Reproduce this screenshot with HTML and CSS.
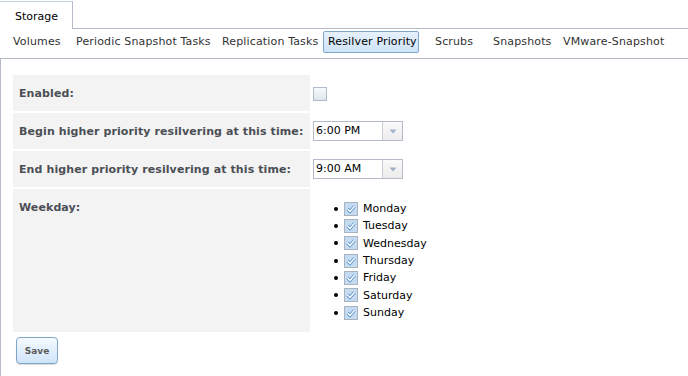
FILE: index.html
```html
<!DOCTYPE html>
<html>
<head>
<meta charset="utf-8">
<link rel="stylesheet" href="styles.css">
</head>
<body>
<div class="tabbar">
  <div class="tab">Storage</div>
  <div class="tabfill"></div>
</div>
<div class="subtabs">
  <span class="subtab st-volumes">Volumes</span>
  <span class="subtab st-periodic">Periodic Snapshot Tasks</span>
  <span class="subtab st-replication">Replication Tasks</span>
  <span class="subtab st-resilver active">Resilver Priority</span>
  <span class="subtab st-scrubs">Scrubs</span>
  <span class="subtab st-snapshots">Snapshots</span>
  <span class="subtab st-vmware">VMware-Snapshot</span>
</div>
<div class="pane">
  <div class="form">
    <div class="label">Enabled:</div>
    <div class="value"><span class="cb"></span></div>

    <div class="label">Begin higher priority resilvering at this time:</div>
    <div class="value">
      <div class="select"><span class="sel-text">6:00 PM</span><span class="sel-arrow"><svg width="8" height="5" viewBox="0 0 8 5"><path d="M0.5 0.5 H7.5 L4 4.5 Z" fill="#9eb1c8"/></svg></span></div>
    </div>

    <div class="label">End higher priority resilvering at this time:</div>
    <div class="value">
      <div class="select"><span class="sel-text">9:00 AM</span><span class="sel-arrow"><svg width="8" height="5" viewBox="0 0 8 5"><path d="M0.5 0.5 H7.5 L4 4.5 Z" fill="#9eb1c8"/></svg></span></div>
    </div>

    <div class="label">Weekday:</div>
    <div class="value value-top">
      <ul class="days">
        <li><svg class="chk" width="14" height="14" viewBox="0 0 14 14"><rect x="0.5" y="0.5" width="13" height="13" fill="#c4dbf2" stroke="#a9b3bd"/><path d="M3.5 7 L6 9.5 L10.5 4.2" fill="none" stroke="#5b93cc" stroke-width="3.2"/><path d="M3.5 7 L6 9.5 L10.5 4.2" fill="none" stroke="#fff" stroke-width="1.5"/></svg>Monday</li>
        <li><svg class="chk" width="14" height="14" viewBox="0 0 14 14"><rect x="0.5" y="0.5" width="13" height="13" fill="#c4dbf2" stroke="#a9b3bd"/><path d="M3.5 7 L6 9.5 L10.5 4.2" fill="none" stroke="#5b93cc" stroke-width="3.2"/><path d="M3.5 7 L6 9.5 L10.5 4.2" fill="none" stroke="#fff" stroke-width="1.5"/></svg>Tuesday</li>
        <li><svg class="chk" width="14" height="14" viewBox="0 0 14 14"><rect x="0.5" y="0.5" width="13" height="13" fill="#c4dbf2" stroke="#a9b3bd"/><path d="M3.5 7 L6 9.5 L10.5 4.2" fill="none" stroke="#5b93cc" stroke-width="3.2"/><path d="M3.5 7 L6 9.5 L10.5 4.2" fill="none" stroke="#fff" stroke-width="1.5"/></svg>Wednesday</li>
        <li><svg class="chk" width="14" height="14" viewBox="0 0 14 14"><rect x="0.5" y="0.5" width="13" height="13" fill="#c4dbf2" stroke="#a9b3bd"/><path d="M3.5 7 L6 9.5 L10.5 4.2" fill="none" stroke="#5b93cc" stroke-width="3.2"/><path d="M3.5 7 L6 9.5 L10.5 4.2" fill="none" stroke="#fff" stroke-width="1.5"/></svg>Thursday</li>
        <li><svg class="chk" width="14" height="14" viewBox="0 0 14 14"><rect x="0.5" y="0.5" width="13" height="13" fill="#c4dbf2" stroke="#a9b3bd"/><path d="M3.5 7 L6 9.5 L10.5 4.2" fill="none" stroke="#5b93cc" stroke-width="3.2"/><path d="M3.5 7 L6 9.5 L10.5 4.2" fill="none" stroke="#fff" stroke-width="1.5"/></svg>Friday</li>
        <li><svg class="chk" width="14" height="14" viewBox="0 0 14 14"><rect x="0.5" y="0.5" width="13" height="13" fill="#c4dbf2" stroke="#a9b3bd"/><path d="M3.5 7 L6 9.5 L10.5 4.2" fill="none" stroke="#5b93cc" stroke-width="3.2"/><path d="M3.5 7 L6 9.5 L10.5 4.2" fill="none" stroke="#fff" stroke-width="1.5"/></svg>Saturday</li>
        <li><svg class="chk" width="14" height="14" viewBox="0 0 14 14"><rect x="0.5" y="0.5" width="13" height="13" fill="#c4dbf2" stroke="#a9b3bd"/><path d="M3.5 7 L6 9.5 L10.5 4.2" fill="none" stroke="#5b93cc" stroke-width="3.2"/><path d="M3.5 7 L6 9.5 L10.5 4.2" fill="none" stroke="#fff" stroke-width="1.5"/></svg>Sunday</li>
      </ul>
    </div>
  </div>
  <button class="save">Save</button>
</div>
</body>
</html>
```

FILE: styles.css
```css
html, body {
  margin: 0;
  padding: 0;
  background: #fff;
  font-family: "DejaVu Sans", Verdana, sans-serif;
  font-size: 11px;
  color: #000;
  overflow: hidden;
}

.tabbar {
  display: flex;
  height: 29px;
  padding-top: 1px;
  box-sizing: border-box;
}

.tab {
  width: 73px;
  box-sizing: border-box;
  border-top: 1px solid #c3d0de;
  border-right: 1px solid #b5bcc7;
  padding: 8px 0 0 15px;
  color: #000;
  line-height: 14px;
}

.tabfill {
  flex: 1;
  border-bottom: 1px solid #b5bcc7;
}

.subtabs {
  display: flex;
  height: 30px;
  box-sizing: border-box;
  padding: 2px 0 0 1px;
  border-bottom: 1px solid #b5bcc7;
  align-items: flex-start;
}

.subtab {
  box-sizing: border-box;
  height: 22px;
  line-height: 20px;
  padding-left: 5px;
  color: #333;
  border: 1px solid transparent;
  border-radius: 2px;
  white-space: nowrap;
  flex: none;
  letter-spacing: 0.15px;
}

.st-volumes { width: 70px; padding-left: 11px; }
.st-periodic { width: 146px; padding-left: 4px; }
.st-replication { width: 106px; padding-left: 4px; }
.st-resilver { width: 96px; padding-left: 4px; }
.st-scrubs { width: 69px; padding-left: 15px; }
.st-snapshots { width: 70px; padding-left: 4px; }
.st-vmware { width: 120px; padding-left: 4px; }

.subtab.active {
  border-color: #7fa6c9;
  background: linear-gradient(#e6f1fc, #cfe3f8);
  color: #000;
}

.pane {
  border-left: 1px solid #b5bcc7;
  padding: 16px 0 12px 12px;
}

.form {
  display: grid;
  grid-template-columns: 297px 1fr;
  grid-auto-rows: minmax(36px, auto);
  gap: 2px;
}

.label {
  background: #f3f3f3;
  font-weight: bold;
  color: #4b4f55;
  padding: 12px 6px 0 6px;
  line-height: 14px;
  white-space: nowrap;
  letter-spacing: 0.1px;
}

.value {
  display: flex;
  align-items: center;
  padding-left: 1px;
}

.value-top {
  align-items: flex-start;
}

.cb {
  display: inline-block;
  width: 14px;
  height: 14px;
  box-sizing: border-box;
  border: 1px solid #b3bcc6;
  background: linear-gradient(#f8fafc, #dde6ef);
  margin-top: 1px;
}

.select {
  display: flex;
  width: 90px;
  height: 20px;
  box-sizing: border-box;
  border: 1px solid #b5bcc7;
  background: #fff;
}

.sel-text {
  flex: 1;
  padding-left: 2px;
  line-height: 18px;
  color: #000;
}

.sel-arrow {
  width: 19px;
  border-left: 1px solid #c8ced6;
  background: linear-gradient(#fafafa, #ececec);
  display: flex;
  align-items: center;
  justify-content: center;
}

.days {
  margin: 11px 0;
  padding-left: 21px;
  list-style: none;
}

.days li {
  display: flex;
  align-items: center;
  height: 17.33px;
}

.days li::before {
  content: "";
  width: 4px;
  height: 4px;
  border-radius: 50%;
  background: #000;
  margin-right: 6px;
}

.chk {
  flex: none;
  margin-right: 5px;
}

.save {
  display: block;
  margin: 5px 0 0 3px;
  width: 42px;
  height: 27px;
  border: 1px solid #7fa6c9;
  border-radius: 4px;
  background: linear-gradient(#f5faff, #cfe4f9);
  box-shadow: 0 1px 1px rgba(0, 0, 0, 0.15);
  font-family: "DejaVu Sans", Verdana, sans-serif;
  font-weight: bold;
  font-size: 9px;
  color: #5b5b5b;
  padding: 0;
}
```
